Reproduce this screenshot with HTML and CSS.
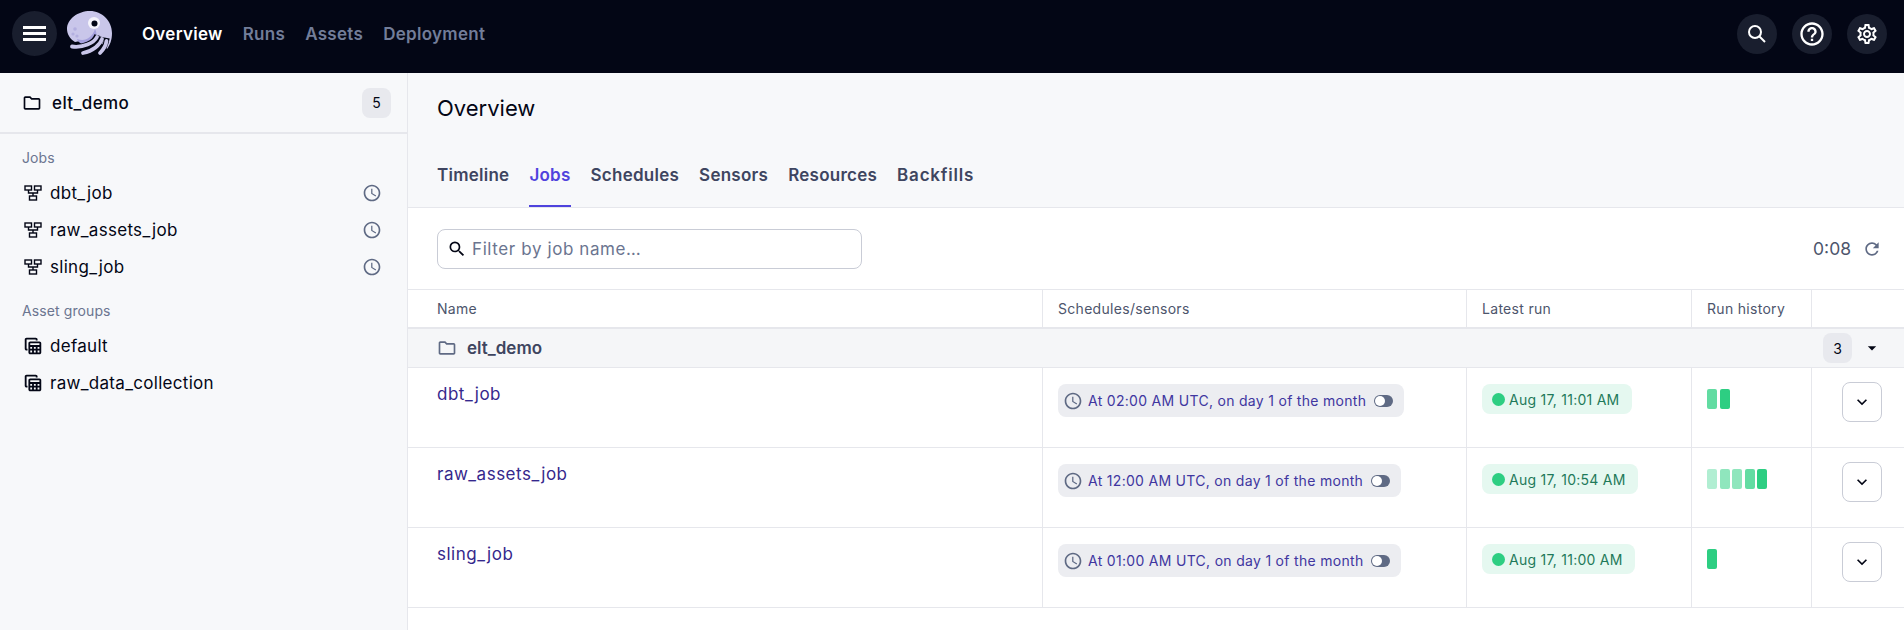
FILE: index.html
```html
<!DOCTYPE html>
<html lang="en">
<head>
    <meta charset="UTF-8">
    <meta name="viewport" content="width=device-width, initial-scale=1.0">
    <title>Overview</title>
    <link rel="stylesheet" href="styles.css">
</head>
<body>
    <svg class="defs">
        <defs>
            <symbol id="i-folder" viewBox="0 0 24 24"><path d="M9.17 6l2 2H20v10H4V6h5.17M10 4H4c-1.1 0-1.99.9-1.99 2L2 18c0 1.1.9 2 2 2h16c1.1 0 2-.9 2-2V8c0-1.1-.9-2-2-2h-8l-2-2z"/></symbol>
            <symbol id="i-clock" viewBox="0 0 24 24"><path d="M11.99 2C6.47 2 2 6.48 2 12s4.47 10 9.99 10C17.52 22 22 17.52 22 12S17.52 2 11.99 2zM12 20c-4.42 0-8-3.58-8-8s3.58-8 8-8 8 3.58 8 8-3.58 8-8 8zm.5-13H11v6l5.25 3.15.75-1.23-4.5-2.67z"/></symbol>
            <symbol id="i-job" viewBox="0 0 20 20"><g fill="none" stroke="currentColor" stroke-width="1.4"><rect x="2" y="3" width="6.5" height="4"/><rect x="11.500" y="3" width="6.500" height="4"/><rect x="6.500" y="13" width="7" height="4"/><path d="M5.500 7v3h9V7M10 10v3"/></g></symbol>
            <symbol id="i-table" viewBox="0 0 24 24"><path d="M19 7H9c-1.1 0-2 .9-2 2v10c0 1.1.9 2 2 2h10c1.1 0 2-.9 2-2V9c0-1.1-.9-2-2-2zm0 2v2H9V9h10zm-6 6v-2h2v2h-2zm2 2v2h-2v-2h2zm-4-2H9v-2h2v2zm6-2h2v2h-2v-2zm-8 4h2v2H9v-2zm8 2v-2h2v2h-2zM6 17H5c-1.1 0-2-.9-2-2V5c0-1.1.9-2 2-2h10c1.1 0 2 .9 2 2v1h-2V5H5v10h1v2z"/></symbol>
            <symbol id="i-search" viewBox="0 0 24 24"><path d="M15.5 14h-.79l-.28-.27A6.471 6.471 0 0 0 16 9.5 6.5 6.5 0 1 0 9.5 16c1.61 0 3.09-.59 4.23-1.57l.27.28v.79l5 4.99L20.49 19l-4.99-5zm-6 0C7.01 14 5 11.99 5 9.5S7.01 5 9.5 5 14 7.01 14 9.5 11.99 14 9.5 14z"/></symbol>
            <symbol id="i-more" viewBox="0 0 24 24"><path d="M16.59 8.59L12 13.17 7.41 8.59 6 10l6 6 6-6z"/></symbol>
        </defs>
    </svg>

    <header class="topbar">
        <div class="topbar-left">
            <button class="round-btn menu-btn"><span></span><span></span><span></span></button>
            <svg class="logo" viewBox="0 0 45 45">
                <path class="logo-body" d="M0 18C0 8 11 0 23 0C35 0 45 10 45 22C45 29 43 34 40 38L30 27L8 31C3 28 0 23 0 18Z"/>
                <path class="logo-shade" d="M10 28C18 31 25 27 28 18C32 25 27 32 18 33C14 33.500 11 31 10 28Z"/>
                <path class="logo-gap" d="M30 24C28 32 16 37 5 35.500M35 26C33 33 26 40 16 42M40 27C39 33 37 38 33 42"/>
                <path class="logo-arm" d="M30 26C27 32 16 37 5 35.500M35 28C33 34 26 40 16 42M39.500 30C39 34 37 38 33 42"/>
                <circle class="logo-eye" cx="27" cy="12" r="6"/>
                <circle class="logo-pupil" cx="27.500" cy="12.500" r="3"/>
                <circle class="logo-dot" cx="8" cy="18" r="1.8"/>
                <circle class="logo-dot" cx="6" cy="23" r="1.6"/>
                <circle class="logo-dot" cx="10" cy="25" r="1.6"/>
            </svg>
            <nav class="topnav">
                <a class="active">Overview</a>
                <a>Runs</a>
                <a>Assets</a>
                <a>Deployment</a>
            </nav>
        </div>
        <div class="topbar-right">
            <button class="round-btn"><svg width="24" height="24"><circle cx="10" cy="10" r="6" fill="none" stroke="#fff" stroke-width="2"/><path d="M14.500 14.500L20 20" stroke="#fff" stroke-width="2"/></svg></button>
            <button class="round-btn"><svg class="icon-white" width="28" height="28" viewBox="0 0 24 24"><path d="M11 18h2v-2h-2v2zm1-16C6.48 2 2 6.48 2 12s4.48 10 10 10 10-4.48 10-10S17.52 2 12 2zm0 18c-4.41 0-8-3.59-8-8s3.59-8 8-8 8 3.59 8 8-3.59 8-8 8zm0-14c-2.21 0-4 1.79-4 4h2c0-1.1.9-2 2-2s2 .9 2 2c0 2-3 1.75-3 5h2c0-2.25 3-2.5 3-5 0-2.21-1.79-4-4-4z"/></svg></button>
            <button class="round-btn"><svg class="icon-white" width="24" height="24" viewBox="0 0 24 24"><path d="M19.43 12.98c.04-.32.07-.64.07-.98 0-.34-.03-.66-.07-.98l2.11-1.65c.19-.15.24-.42.12-.64l-2-3.46c-.09-.16-.26-.25-.44-.25-.06 0-.12.01-.17.03l-2.49 1c-.52-.4-1.08-.73-1.69-.98l-.38-2.65C14.46 2.18 14.25 2 14 2h-4c-.25 0-.46.18-.49.42l-.38 2.65c-.61.25-1.17.59-1.69.98l-2.49-1c-.06-.02-.12-.03-.18-.03-.17 0-.34.09-.43.25l-2 3.46c-.13.22-.07.49.12.64l2.11 1.65c-.04.32-.07.65-.07.98 0 .33.03.66.07.98l-2.11 1.65c-.19.15-.24.42-.12.64l2 3.46c.09.16.26.25.44.25.06 0 .12-.01.17-.03l2.49-1c.52.4 1.08.73 1.69.98l.38 2.65c.03.24.24.42.49.42h4c.25 0 .46-.18.49-.42l.38-2.65c.61-.25 1.17-.59 1.69-.98l2.49 1c.06.02.12.03.18.03.17 0 .34-.09.43-.25l2-3.46c.12-.22.07-.49-.12-.64l-2.11-1.65zm-1.98-1.71c.04.31.05.52.05.73 0 .21-.02.43-.05.73l-.14 1.13.89.7 1.08.84-.7 1.21-1.27-.51-1.04-.42-.9.68c-.43.32-.84.56-1.25.73l-1.06.43-.16 1.13-.2 1.35h-1.4l-.19-1.35-.16-1.13-1.06-.43c-.43-.18-.83-.41-1.23-.71l-.91-.7-1.06.43-1.27.51-.7-1.21 1.08-.84.89-.7-.14-1.13c-.03-.31-.05-.54-.05-.74s.02-.43.05-.73l.14-1.13-.89-.7-1.08-.84.7-1.21 1.27.51 1.04.42.9-.68c.43-.32.84-.56 1.25-.73l1.06-.43.16-1.13.2-1.35h1.39l.19 1.35.16 1.13 1.06.43c.43.18.83.41 1.23.71l.91.7 1.06-.43 1.27-.51.7 1.21-1.07.85-.89.7.14 1.13zM12 8c-2.21 0-4 1.79-4 4s1.79 4 4 4 4-1.79 4-4-1.79-4-4-4zm0 6c-1.1 0-2-.9-2-2s.9-2 2-2 2 .9 2 2-.9 2-2 2z"/></svg></button>
        </div>
    </header>

    <div class="layout">
        <aside class="sidebar">
            <div class="repo">
                <svg class="icon icon-dark"><use href="#i-folder"/></svg>
                <span class="repo-name">elt_demo</span>
                <span class="badge">5</span>
            </div>
            <div class="side-label">Jobs</div>
            <div class="side-item"><svg class="icon job-icon"><use href="#i-job"/></svg><span>dbt_job</span><svg class="icon icon-gray"><use href="#i-clock"/></svg></div>
            <div class="side-item"><svg class="icon job-icon"><use href="#i-job"/></svg><span>raw_assets_job</span><svg class="icon icon-gray"><use href="#i-clock"/></svg></div>
            <div class="side-item"><svg class="icon job-icon"><use href="#i-job"/></svg><span>sling_job</span><svg class="icon icon-gray"><use href="#i-clock"/></svg></div>
            <div class="side-label side-label-next">Asset groups</div>
            <div class="side-item"><svg class="icon icon-dark table-icon"><use href="#i-table"/></svg><span>default</span></div>
            <div class="side-item"><svg class="icon icon-dark table-icon"><use href="#i-table"/></svg><span>raw_data_collection</span></div>
        </aside>

        <main class="main">
            <div class="page-head">
                <h1>Overview</h1>
                <div class="tabs">
                    <a>Timeline</a>
                    <a class="active">Jobs</a>
                    <a>Schedules</a>
                    <a>Sensors</a>
                    <a>Resources</a>
                    <a>Backfills</a>
                </div>
            </div>

            <div class="toolbar">
                <div class="filter">
                    <svg class="icon icon-black"><use href="#i-search"/></svg>
                    <span>Filter by job name…</span>
                </div>
                <div class="timer">
                    <span>0:08</span>
                    <svg class="icon icon-gray" viewBox="0 0 24 24"><path d="M17.65 6.35C16.2 4.9 14.21 4 12 4c-4.42 0-7.99 3.58-7.99 8s3.57 8 7.99 8c3.73 0 6.84-2.55 7.73-6h-2.08c-.82 2.33-3.04 4-5.65 4-3.31 0-6-2.69-6-6s2.69-6 6-6c1.66 0 3.14.69 4.22 1.78L13 11h7V4l-2.35 2.35z"/></svg>
                </div>
            </div>

            <div class="row head-row">
                <div>Name</div>
                <div>Schedules/sensors</div>
                <div>Latest run</div>
                <div>Run history</div>
                <div></div>
            </div>

            <div class="group-row">
                <svg class="icon icon-gray"><use href="#i-folder"/></svg>
                <span class="group-name">elt_demo</span>
                <span class="badge">3</span>
                <svg class="group-arrow" viewBox="0 0 24 24"><path d="M7 10l5 5 5-5z"/></svg>
            </div>

            <div class="row job-row">
                <div class="job-name">dbt_job</div>
                <div><span class="sched"><svg class="icon icon-gray"><use href="#i-clock"/></svg>At 02:00 AM UTC, on day 1 of the month<i class="toggle"></i></span></div>
                <div><span class="run-tag"><i class="dot"></i>Aug 17, 11:01 AM</span></div>
                <div class="bars"><i class="bar light"></i><i class="bar"></i></div>
                <div class="act"><button class="more"><svg class="icon icon-black"><use href="#i-more"/></svg></button></div>
            </div>
            <div class="row job-row">
                <div class="job-name">raw_assets_job</div>
                <div><span class="sched"><svg class="icon icon-gray"><use href="#i-clock"/></svg>At 12:00 AM UTC, on day 1 of the month<i class="toggle"></i></span></div>
                <div><span class="run-tag"><i class="dot"></i>Aug 17, 10:54 AM</span></div>
                <div class="bars tight"><i class="bar faint"></i><i class="bar lighter"></i><i class="bar lighter"></i><i class="bar light"></i><i class="bar"></i></div>
                <div class="act"><button class="more"><svg class="icon icon-black"><use href="#i-more"/></svg></button></div>
            </div>
            <div class="row job-row">
                <div class="job-name">sling_job</div>
                <div><span class="sched"><svg class="icon icon-gray"><use href="#i-clock"/></svg>At 01:00 AM UTC, on day 1 of the month<i class="toggle"></i></span></div>
                <div><span class="run-tag"><i class="dot"></i>Aug 17, 11:00 AM</span></div>
                <div class="bars"><i class="bar"></i></div>
                <div class="act"><button class="more"><svg class="icon icon-black"><use href="#i-more"/></svg></button></div>
            </div>
        </main>
    </div>
</body>
</html>
```

FILE: styles.css
```css
* {
    box-sizing: border-box;
}

html, body {
    height: 100%;
}

body {
    margin: 0;
    overflow: hidden;
    font-family: Inter, "Noto Sans", sans-serif;
    font-size: 14px;
    color: #030615;
    background-color: #fff;
}

.defs {
    display: none;
}

i {
    display: block;
}

/* top bar */
.topbar {
    height: 73px;
    padding: 0 17px 6px 12px;
    display: flex;
    align-items: center;
    justify-content: space-between;
    background-color: #030615;
}

.topbar-left, .topbar-right {
    display: flex;
    align-items: center;
}

.topbar-right {
    gap: 15px;
}

.round-btn {
    width: 40px;
    height: 40px;
    padding: 0;
    display: flex;
    flex-direction: column;
    align-items: center;
    justify-content: center;
    border: none;
    border-radius: 50%;
    background-color: #191e2e;
}

.menu-btn {
    width: 45px;
    height: 45px;
    gap: 3px;
}

.menu-btn span {
    width: 23px;
    height: 3px;
    background-color: #fff;
}

.logo {
    width: 45px;
    height: 45px;
    margin-left: 10px;
}

.logo-body {
    fill: #c9c6ea;
}

.logo-shade {
    fill: #a5a0dd;
}

.logo-gap {
    fill: none;
    stroke: #030615;
    stroke-width: 5.4;
}

.logo-arm {
    fill: none;
    stroke: #c9c6ea;
    stroke-width: 3.8;
    stroke-linecap: round;
}

.logo-eye {
    fill: #f4f3fb;
}

.logo-pupil {
    fill: #030615;
}

.logo-dot {
    fill: #b3afe0;
}

.icon-white {
    fill: #fff;
}

.topnav {
    margin-left: 30px;
    display: flex;
    gap: 20px;
    font-size: 17px;
    letter-spacing: .3px;
    font-weight: 600;
    color: #727d99;
}

.topnav .active {
    color: #fff;
}

/* layout */
.layout {
    display: flex;
    height: 557px;
}

.sidebar {
    width: 408px;
    flex: none;
    background-color: #f7f8fa;
    border-right: 1px solid #e6e7ec;
}

.icon {
    width: 20px;
    height: 20px;
    flex: none;
}

.icon-dark, .icon-black {
    fill: #030615;
}

.icon-gray {
    fill: #5f6a84;
}

.job-icon {
    color: #030615;
}

.table-icon {
    width: 22px;
    height: 22px;
    margin: 0 -1px;
}

.repo {
    height: 61px;
    padding: 0 16px 0 22px;
    display: flex;
    align-items: center;
    gap: 10px;
    font-size: 17px;
    letter-spacing: .4px;
    border-bottom: 2px solid #e6e7ec;
}

.repo-name {
    flex: 1;
    font-weight: 500;
}

.badge {
    width: 29px;
    height: 30px;
    display: flex;
    align-items: center;
    justify-content: center;
    border-radius: 8px;
    font-size: 14px;
    letter-spacing: 0;
    background-color: #e8e9ee;
}

.side-label {
    padding: 16px 22px 8px;
    font-size: 14px;
    letter-spacing: .1px;
    line-height: 16px;
    color: #6b7590;
}

.side-label-next {
    padding-top: 18px;
    padding-bottom: 8px;
}

.side-item {
    height: 37px;
    padding: 0 25px 0 23px;
    display: flex;
    align-items: center;
    gap: 7px;
    font-size: 17px;
    letter-spacing: .3px;
}

.side-item span {
    flex: 1;
}

/* main */
.main {
    flex: 1;
    min-width: 0;
}

.page-head {
    height: 135px;
    padding: 0 29px;
    display: flex;
    flex-direction: column;
    justify-content: space-between;
    background-color: #f7f8fa;
    border-bottom: 1px solid #e6e7ec;
}

h1 {
    margin: 21px 0 0;
    font-size: 22px;
    line-height: 28px;
    font-weight: 400;
}

.tabs {
    display: flex;
    gap: 20px;
    font-size: 17px;
    letter-spacing: .25px;
    font-weight: 600;
    color: #3e4560;
}

.tabs a {
    height: 46px;
    padding-top: 4px;
    line-height: 20px;
}

.tabs a:last-child {
    letter-spacing: .8px;
}

.tabs .active {
    color: #4f43dd;
    border-bottom: 2px solid #4f43dd;
}

.toolbar {
    height: 81px;
    padding: 0 22px 0 29px;
    display: flex;
    align-items: center;
    justify-content: space-between;
}

.filter {
    width: 425px;
    height: 40px;
    padding: 0 9px;
    display: flex;
    align-items: center;
    gap: 5px;
    border: 1px solid #c9ccd6;
    border-radius: 8px;
    font-size: 17px;
    letter-spacing: .6px;
    color: #6b7590;
}

.timer {
    display: flex;
    align-items: center;
    gap: 11px;
    font-size: 17.5px;
    color: #4d556c;
}

/* table */
.row {
    display: grid;
    grid-template-columns: 634px 424px 225px 120px 1fr;
    border-bottom: 1px solid #e6e7ec;
}

.row > div {
    padding-left: 15px;
    border-left: 1px solid #e6e7ec;
}

.row > div:first-child {
    padding-left: 29px;
    border-left: none;
}

.head-row {
    height: 40px;
    border-top: 1px solid #e6e7ec;
    border-bottom-width: 2px;
    line-height: 38px;
    letter-spacing: .3px;
    color: #4d556c;
}

.group-row {
    height: 39px;
    padding: 0 22px 0 29px;
    display: flex;
    align-items: center;
    background-color: #f5f6f8;
    border-bottom: 1px solid #e6e7ec;
}

.group-name {
    flex: 1;
    margin-left: 10px;
    font-size: 17px;
    font-weight: 600;
    color: #3e4560;
}

.group-arrow {
    width: 20px;
    height: 20px;
    margin-left: 10px;
    fill: #030615;
}

.job-row {
    height: 80px;
}

.job-row > div {
    padding-top: 16px;
}

.job-row .job-name {
    padding-top: 14px;
    font-size: 17px;
    letter-spacing: .5px;
    line-height: 24px;
    color: #35288c;
}

.sched {
    display: inline-flex;
    align-items: center;
    height: 33px;
    padding: 0 11px 0 5px;
    gap: 5px;
    border-radius: 8px;
    background-color: #ecedf1;
    color: #4036a0;
    letter-spacing: .3px;
}

.toggle {
    display: flex;
    align-items: center;
    width: 19px;
    height: 12px;
    margin-left: 3px;
    padding-left: 1px;
    border-radius: 6px;
    background-color: #5f6a84;
}

.toggle::before {
    content: "";
    width: 10px;
    height: 10px;
    border-radius: 50%;
    background-color: #fff;
}

.run-tag {
    display: inline-flex;
    align-items: center;
    height: 30px;
    padding: 0 12px 0 10px;
    gap: 4px;
    border-radius: 8px;
    background-color: #e5f8f0;
    color: #1f7a5a;
    letter-spacing: .25px;
}

.dot {
    width: 13px;
    height: 13px;
    border-radius: 50%;
    background-color: #2dce82;
}

.job-row .bars {
    padding-top: 21px;
    display: flex;
    gap: 3px;
}

.job-row .bars.tight {
    gap: 2.5px;
}

.bar {
    width: 10px;
    height: 20px;
    border-radius: 2px;
    background-color: #2dce82;
}

.bar.light {
    background-color: #62dca2;
}

.bar.lighter {
    background-color: #8fe6bd;
}

.bar.faint {
    background-color: #b1eed2;
}

.job-row .act {
    padding: 14px 22px 0 0;
    display: flex;
    justify-content: flex-end;
}

.more {
    width: 40px;
    height: 40px;
    padding: 0;
    display: flex;
    align-items: center;
    justify-content: center;
    border: 1px solid #c9ccd6;
    border-radius: 8px;
    background-color: #fff;
}
```
